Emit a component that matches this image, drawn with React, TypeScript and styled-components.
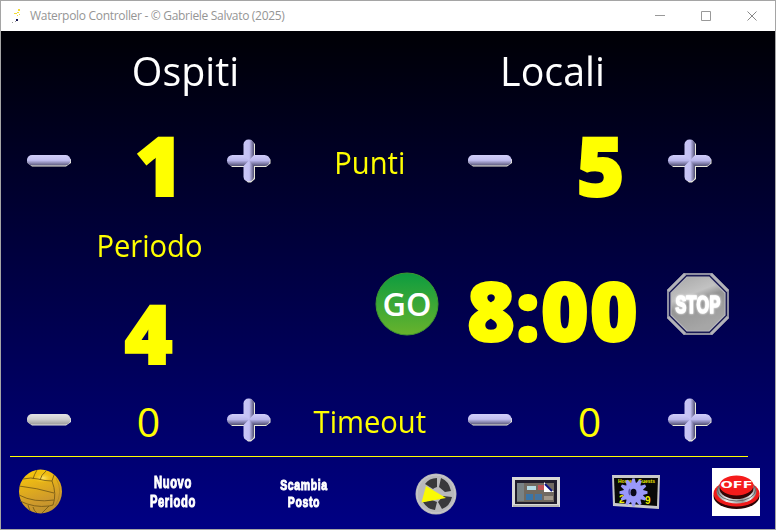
import React from "react";
import styled, { createGlobalStyle } from "styled-components";

const GlobalStyle = createGlobalStyle`
  * { box-sizing: border-box; }
  body { margin: 0; overflow: hidden; font-family: "Open Sans", "Noto Sans", sans-serif; }
  button { border: 0; padding: 0; background: none; display: block; }
  svg { display: block; }
`;

const Window = styled.div`
  width: 776px;
  height: 530px;
  display: flex;
  flex-direction: column;
  border: 1px solid #a5a5a5;
  background: #fff;
`;

const TitleBar = styled.header`
  height: 30px;
  flex: none;
  display: flex;
  align-items: center;
  padding-left: 10px;
  color: #959595;
`;

const Title = styled.h1`
  margin: 0 auto 0 7px;
  font-size: 12px;
  font-weight: 400;
  line-height: 30px;
  letter-spacing: -0.31px;
  white-space: nowrap;
`;

const WindowButton = styled.button`
  width: 46px;
  height: 29px;
  display: grid;
  place-items: center;
`;

const Board = styled.main`
  flex: 1;
  display: flex;
  flex-direction: column;
  background: linear-gradient(#000005, #000084);
`;

const TeamRow = styled.section`
  height: 79px;
  display: grid;
  grid-template-columns: 369px 365px;
`;

const Team = styled.h2`
  margin: 0;
  color: #fff;
  font-size: 41px;
  font-weight: 400;
  line-height: 78px;
  text-align: center;
  transform: scaleX(0.96);
`;

const CounterRow = styled.section<{ $height: number }>`
  height: ${(p) => p.$height}px;
  display: grid;
  grid-template-columns: 96px 103px 98px 143px 97px 103px 97px;
  grid-template-rows: 100%;
  align-items: center;
  justify-items: center;
`;

const Label = styled.span`
  color: #ff0;
  font-size: 31px;
  line-height: 42px;
  padding-top: 2px;
  white-space: nowrap;
  transform: scaleX(0.94);
`;

const SmallValue = styled.span`
  color: #ff0;
  font-size: 41px;
  line-height: 52px;
  padding-top: 2px;
`;

const BigValue = styled.span<{ $shift?: number; $drop?: number }>`
  color: #ff0;
  font-family: "Noto Sans", "Open Sans", sans-serif;
  font-size: 82px;
  font-weight: 900;
  line-height: 100px;
  letter-spacing: 1px;
  -webkit-text-stroke: 2px #ff0;
  white-space: nowrap;
  margin-left: ${(p) => p.$shift ?? 0}px;
  margin-top: ${(p) => p.$drop ?? 0}px;
`;

const MiddleRow = styled.section`
  height: 182px;
  display: grid;
  grid-template-columns: 296px 1fr;
`;

const Period = styled.div`
  display: flex;
  flex-direction: column;
  align-items: center;
  padding-top: 10px;
`;

const Clock = styled.div`
  display: grid;
  grid-template-columns: 66px 226px 64px;
  grid-template-rows: 100%;
  align-items: center;
  justify-items: center;
  height: 102px;
  margin: 41px 0 0 77px;
`;

const Divider = styled.hr`
  width: 738px;
  height: 1px;
  margin: 10px 0 0 9px;
  border: 0;
  flex: none;
  background: #ff0;
`;

const Toolbar = styled.footer`
  height: 70px;
  display: grid;
  grid-template-columns: 105px 131px 132px 117px 99px 101px 88px;
  grid-template-rows: 100%;
  align-items: center;
  justify-items: center;
`;

const ToolButton = styled.button<{ $dx?: number; $dy?: number }>`
  margin-left: ${(p) => p.$dx ?? 0}px;
  margin-top: ${(p) => p.$dy ?? 0}px;
`;

const Caption = styled.span<{ $size: number; $line: number }>`
  display: block;
  color: #fff;
  font-family: "Liberation Sans", Arial, sans-serif;
  font-weight: 700;
  font-size: ${(p) => p.$size}px;
  line-height: ${(p) => p.$line}px;
  text-align: center;
  letter-spacing: 0.9px;
  -webkit-text-stroke: 1px #fff;
  transform: scaleX(0.7);
`;

const StopText = styled.text`
  font: 700 23px "Liberation Sans", Arial, sans-serif;
  text-anchor: middle;
  letter-spacing: 0.5px;
  fill: #fff;
  stroke: #fff;
  stroke-width: 1.6px;
  filter: drop-shadow(0 0 1.200px #fff);
`;

const MinusIcon = ({ gray = false }: { gray?: boolean }) => {
  const id = gray ? "bar-gray" : "bar-lilac";
  const [a, b, c] = gray ? ["#e4e4e4", "#cfcfcf", "#9c9c9c"] : ["#d2cffa", "#c2bff0", "#5c5a7c"];
  return (
    <svg width="46" height="14" viewBox="0 0 46 14">
      <defs>
        <linearGradient id={id} x2="0" y2="1">
          <stop offset="0" stopColor={a} />
          <stop offset=".5" stopColor={b} />
          <stop offset="1" stopColor={c} />
        </linearGradient>
      </defs>
      <path d="M6 2h34l5 3.500v3.500l-5 3.500H6L1.500 9V5z" fill={gray ? "#e2e2e2" : "#f0f0e0"} />
      <rect x="1" y="1" width="43.500" height="10.500" rx="5" fill={`url(#${id})`} />
    </svg>
  );
};

const PlusIcon = () => (
  <svg width="46" height="46" viewBox="0 0 46 46">
    <defs>
      <linearGradient id="plus-h" x2="0" y2="1">
        <stop offset="0" stopColor="#d0cdfa" />
        <stop offset=".5" stopColor="#bab7ec" />
        <stop offset="1" stopColor="#504e72" />
      </linearGradient>
      <linearGradient id="plus-v">
        <stop offset="0" stopColor="#c9c6f5" />
        <stop offset=".55" stopColor="#c4c1f4" />
        <stop offset="1" stopColor="#4e4c70" />
      </linearGradient>
    </defs>
    <path d="M18 6l4-4h3l4 4v12h12l3.500 3.500v4L40 29H29v12l-4 3.500h-3L18 41V29H6l-4-4v-3l4-4h12z" fill="#e9e9dc" />
    <rect x="1" y="17" width="43" height="11" rx="5.500" fill="url(#plus-h)" />
    <rect x="17.500" y="1.500" width="10.500" height="42" rx="5" fill="url(#plus-v)" />
    <path d="M17.500 17l5.500 5.500-5.500 5.500H16V17zM28 17l-5 5.500 5 5.500h2V17z" fill="url(#plus-h)" />
  </svg>
);

const GoIcon = () => (
  <svg width="66" height="66" viewBox="0 0 66 66">
    <defs>
      <linearGradient id="go" x2="0" y2="1">
        <stop offset="0" stopColor="#0d9c40" />
        <stop offset="1" stopColor="#68b32c" />
      </linearGradient>
    </defs>
    <circle cx="33" cy="33" r="31" fill="url(#go)" stroke="#3f9630" />
    <text x="33" y="44.500" textAnchor="middle" fontFamily="Open Sans" fontSize="33" fontWeight="600" fill="#fff" textLength="49" lengthAdjust="spacingAndGlyphs">GO</text>
  </svg>
);

const StopIcon = () => (
  <svg width="64" height="64" viewBox="0 0 64 64">
    <defs>
      <linearGradient id="stop" x2=".4" y2="1">
        <stop offset="0" stopColor="#a6a6a6" />
        <stop offset=".4" stopColor="#c2c2c2" />
        <stop offset=".55" stopColor="#959595" />
        <stop offset="1" stopColor="#a6a6a6" />
      </linearGradient>
    </defs>
    <path d="M18 1h28l17 17v28L46 63H18L1 46V18z" fill="#8f8fa0" />
    <path d="M20 3h24l17 17v24L44 61H20L3 44V20z" fill="#1a1a55" />
    <path d="M21 5h22l16 16v22L43 59H21L5 43V21z" fill="url(#stop)" stroke="#b4b4b8" strokeWidth="1.200" />
    <path d="M19 2L2 19M45 2l17 17M2 45l17 17M62 45L45 62" stroke="#b2b2b8" strokeWidth="3" />
    <g transform="translate(32 41) scale(.7 1.080)">
      <StopText>STOP</StopText>
    </g>
  </svg>
);

const BallIcon = () => (
  <svg width="44" height="46" viewBox="0 0 44 46">
    <defs>
      <linearGradient id="ball" x1=".3" x2=".6" y2="1">
        <stop offset="0" stopColor="#f8c80a" />
        <stop offset=".35" stopColor="#e4b01a" />
        <stop offset=".7" stopColor="#cf9a2b" />
        <stop offset="1" stopColor="#bc902e" />
      </linearGradient>
      <radialGradient id="ball-shine">
        <stop offset="0" stopColor="#ffe66e" />
        <stop offset="1" stopColor="#f8c80a" stopOpacity="0" />
      </radialGradient>
    </defs>
    <ellipse cx="22.500" cy="22.500" rx="21.500" ry="22" fill="url(#ball)" />
    <ellipse cx="25" cy="9" rx="10" ry="5" fill="url(#ball-shine)" />
    <g fill="none" stroke="#6e5414" strokeWidth=".8">
      <path d="M5 10q8-2 15 0t14 2l2-6M34 12q5 13 1 24M1 17q18 2 35 7M1 26q15 8 35 5M2 32q14 7 29 5l4-1M19 1q-3 5-4 9M28 2q-5 4-6 9M10 36l2 6M15 38q1 4 4 6M31 37l-7 7" />
      <path d="M38 9q8 14-1 28" opacity=".3" />
    </g>
  </svg>
);

const ReelIcon = () => (
  <svg width="42" height="42" viewBox="0 0 42 42">
    <circle cx="21" cy="21" r="20.500" fill="#b9b9bb" />
    <circle cx="21" cy="21" r="19" fill="none" stroke="#cacacc" />
    <g fill="#39393b">
      <path d="M22 5q-8 0-12 6l8 5q1-1 4-2zM26 5q8 3 10 13l-6 1-6-5zM37 24q-2 9-10 12l-4-7 5-6zM20 37q-8-1-12-8l9-2 5 2z" />
    </g>
    <path d="M11 13L31 25 6.500 29.500z" fill="#fafa05" />
  </svg>
);

const PhotoIcon = () => (
  <svg width="48" height="30" viewBox="0 0 48 30">
    <rect width="48" height="30" fill="#d9d9d7" />
    <rect x="1" y="28" width="46" height="2" fill="#b5b5b2" />
    <rect x="3" y="3" width="42" height="24" fill="#201d2c" />
    <rect x="5" y="6" width="37" height="19" fill="#716a61" />
    <rect x="5" y="6" width="7" height="18" fill="#788285" />
    <rect x="15" y="9" width="9" height="4" fill="#b5dbe5" />
    <rect x="26" y="8" width="6" height="5" fill="#bf5357" />
    <rect x="14" y="17" width="7" height="6" fill="#3975a9" />
    <rect x="23" y="17" width="7" height="6" fill="#4474a1" />
    <rect x="32" y="19" width="9" height="4" fill="#a3998b" />
    <path d="M32 5l10 10h-10z" fill="#fff" />
    <path d="M33 7l7 7" stroke="#071080" strokeWidth="2" />
  </svg>
);

const teeth = Array.from({ length: 12 }, (_, i) => i * 30);

const SettingsIcon = () => (
  <svg width="48" height="36" viewBox="0 0 48 36">
    <path d="M0 1h48l-1 34L1 32z" fill="#c8c8ca" />
    <path d="M2 4h44l-1 28L3 29z" fill="#080808" />
    <g fill="#efef00" fontFamily="Liberation Sans" fontWeight="700">
      <text x="6" y="9" fontSize="5">Home</text>
      <text x="26" y="9" fontSize="5">Guests</text>
      <text x="7" y="29" fontSize="10">2</text>
      <text x="33" y="30" fontSize="10">9</text>
    </g>
    <g fill="#9a99fb">
      <circle cx="21.500" cy="18.500" r="10" />
      {teeth.map((a) => (
        <path key={a} d="M18.800 10l1.500-5.500h2.400l1.500 5.500z" transform={`rotate(${a} 21.500 18.500)`} />
      ))}
    </g>
    <ellipse cx="21.500" cy="18.500" rx="3" ry="3.700" fill="#09091c" />
    <path d="M18 15q-2 3 0 6" fill="none" stroke="#5554a8" strokeWidth="1.500" />
  </svg>
);

const OffIcon = () => (
  <svg width="48" height="48" viewBox="0 0 48 48">
    <defs>
      <linearGradient id="steel">
        <stop offset="0" stopColor="#777" />
        <stop offset=".25" stopColor="#eee" />
        <stop offset=".65" stopColor="#999" />
        <stop offset=".85" stopColor="#eee" />
        <stop offset="1" stopColor="#777" />
      </linearGradient>
    </defs>
    <rect width="48" height="48" fill="#fff" />
    <ellipse cx="24.500" cy="28" rx="23" ry="13" fill="#2c0505" />
    <ellipse cx="24.500" cy="25.500" rx="23" ry="13" fill="#f01818" />
    <ellipse cx="24.500" cy="23.500" rx="20" ry="12" fill="url(#steel)" />
    <ellipse cx="24.500" cy="22" rx="19" ry="11" fill="none" stroke="#555" strokeWidth=".8" />
    <ellipse cx="24.500" cy="20.500" rx="17" ry="10.500" fill="#350505" />
    <ellipse cx="24.500" cy="17.500" rx="17" ry="10" fill="#f51b1b" />
    <text x="24.500" y="20" textAnchor="middle" textLength="32" lengthAdjust="spacingAndGlyphs" fontFamily="DejaVu Sans" fontWeight="700" fontSize="9.500" fill="#fff">OFF</text>
  </svg>
);

const AppIcon = () => (
  <svg width="12" height="16" viewBox="0 0 12 16">
    <path d="M7 1h2v2H7zM3 5h3v1H3zM6 4h2v1H6zM8 6h1v1H8zM6 7h1v1H6z" fill="#f3dc35" />
    <path d="M5 11h2v2H5z" fill="#141450" />
    <path d="M1 14h1v1H1zM4 13h1v1H4z" fill="#999" />
  </svg>
);

const Minus = ({ gray = false }: { gray?: boolean }) => (
  <button aria-label="Meno"><MinusIcon gray={gray} /></button>
);
const Plus = () => (
  <button aria-label="Più"><PlusIcon /></button>
);

export default function App() {
  return (
    <>
      <GlobalStyle />
      <Window>
        <TitleBar>
          <AppIcon />
          <Title>Waterpolo Controller - © Gabriele Salvato (2025)</Title>
          <WindowButton aria-label="Riduci">
            <svg width="11" height="11"><path d="M0 4.500h10" stroke="#999" /></svg>
          </WindowButton>
          <WindowButton aria-label="Ingrandisci">
            <svg width="11" height="11"><path d="M.5.500h9v9h-9z" stroke="#999" fill="none" /></svg>
          </WindowButton>
          <WindowButton aria-label="Chiudi">
            <svg width="11" height="11"><path d="M.5.500l9 9M9.500.500l-9 9" stroke="#888" /></svg>
          </WindowButton>
        </TitleBar>
        <Board>
          <TeamRow>
            <Team>Ospiti</Team>
            <Team>Locali</Team>
          </TeamRow>
          <CounterRow $height={102}>
            <Minus />
            <BigValue $shift={22} $drop={6}>1</BigValue>
            <Plus />
            <Label>Punti</Label>
            <Minus />
            <BigValue $shift={23} $drop={6}>5</BigValue>
            <Plus />
          </CounterRow>
          <MiddleRow>
            <Period>
              <Label>Periodo</Label>
              <BigValue $drop={16}>4</BigValue>
            </Period>
            <Clock>
              <button aria-label="Avvia"><GoIcon /></button>
              <BigValue $drop={10}>8:00</BigValue>
              <button aria-label="Ferma"><StopIcon /></button>
            </Clock>
          </MiddleRow>
          <CounterRow $height={52}>
            <Minus gray />
            <SmallValue>0</SmallValue>
            <Plus />
            <Label>Timeout</Label>
            <Minus />
            <SmallValue>0</SmallValue>
            <Plus />
          </CounterRow>
          <Divider />
          <Toolbar>
            <ToolButton $dx={-27}><BallIcon /></ToolButton>
            <ToolButton $dx={2}>
              <Caption $size={16} $line={19}>Nuovo<br />Periodo</Caption>
            </ToolButton>
            <ToolButton $dx={2} $dy={2}>
              <Caption $size={15} $line={17}>Scambia<br />Posto</Caption>
            </ToolButton>
            <ToolButton $dx={17} $dy={3}><ReelIcon /></ToolButton>
            <ToolButton><PhotoIcon /></ToolButton>
            <ToolButton><SettingsIcon /></ToolButton>
            <ToolButton $dx={11}><OffIcon /></ToolButton>
          </Toolbar>
        </Board>
      </Window>
    </>
  );
}
